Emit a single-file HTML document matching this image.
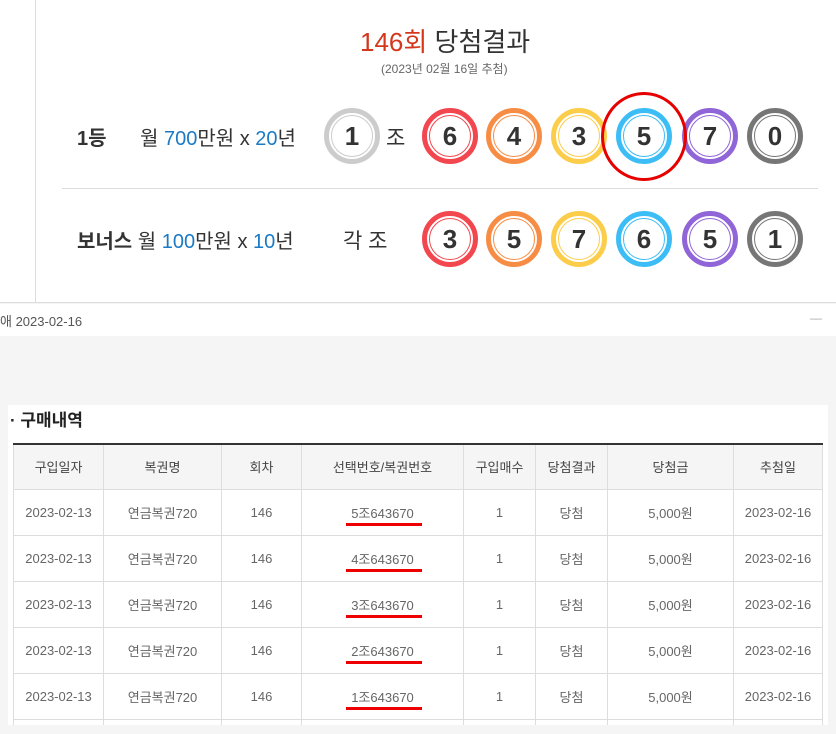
<!DOCTYPE html>
<html style="width:836px;height:734px;overflow:hidden"><head><meta charset="utf-8"><style>
*{margin:0;padding:0;box-sizing:border-box}
body{width:836px;height:734px;overflow:hidden;background:#f5f5f5;font-family:"Liberation Sans","Noto Sans CJK KR",sans-serif;position:relative;color:#333}
.top{position:absolute;left:0;top:0;width:836px;height:303px;background:#fff;border-bottom:1px solid #ddd}
.vl{position:absolute;left:35px;top:0;width:1px;height:303px;background:#ddd}
.t{position:absolute;white-space:nowrap}
.ball{position:absolute;width:56px;height:56px;border-radius:50%;border:5px solid;background:#fff;text-align:center;line-height:46px;font-size:26px;font-weight:bold;color:#333}
.ball:after{content:"";position:absolute;left:2px;top:2px;right:2px;bottom:2px;border:1px solid;border-color:inherit;border-radius:50%}
.r{border-color:#f2474f}.o{border-color:#f78d45}.y{border-color:#fbcd4a}.b{border-color:#3dbdf6}.p{border-color:#9065d8}.g{border-color:#767676}.w{border-color:#ccc}
.bar{position:absolute;left:0;top:304px;width:836px;height:32px;background:#fff}
.panel{position:absolute;left:8px;top:405px;width:820px;height:320px;background:#fff}
.tw{position:absolute;left:13px;top:443px;width:810px;height:282px;overflow:hidden}
table{width:810px;border-collapse:collapse;border-top:2px solid #333;font-size:13px;color:#666}
td,th{border:1px solid #ddd;text-align:center;height:46px;font-weight:normal;position:relative;padding:0}
th{background:#f5f5f5;color:#444;height:45px}
.ul{position:absolute;left:44px;bottom:9px;width:76px;height:3px;background:#e00}
</style></head><body>
<div class="top"></div><div class="vl"></div>
<div class="t" style="left:360px;top:22px;font-size:26px;color:#333"><span style="color:#d4371c">146회</span> 당첨결과</div>
<div class="t" style="left:381px;top:60px;font-size:12px;color:#666">(2023년 02월 16일 추첨)</div>
<div class="t" style="left:77px;top:122px;font-size:20px;font-weight:bold">1등</div>
<div class="t" style="left:140px;top:122px;font-size:20px">월 <span style="color:#1a7ac6">700</span>만원 x <span style="color:#1a7ac6">20</span>년</div>
<div class="ball w" style="left:324px;top:108px">1</div>
<div class="t" style="left:386px;top:122px;font-size:21px">조</div>
<div class="ball r" style="left:422px;top:108px">6</div>
<div class="ball o" style="left:486px;top:108px">4</div>
<div class="ball y" style="left:551px;top:108px">3</div>
<div class="ball b" style="left:616px;top:108px">5</div>
<div class="ball p" style="left:682px;top:108px">7</div>
<div class="ball g" style="left:747px;top:108px">0</div>
<div style="position:absolute;left:601px;top:92px;width:86px;height:89px;border:3px solid #e60000;border-radius:50%"></div>
<div style="position:absolute;left:62px;top:188px;width:756px;height:1px;background:#ddd"></div>
<div class="t" style="left:77px;top:225px;font-size:20px;font-weight:bold">보너스 <span style="font-weight:normal">월 <span style="color:#1a7ac6">100</span>만원 x <span style="color:#1a7ac6">10</span>년</span></div>
<div class="t" style="left:343px;top:225px;font-size:21px">각 조</div>
<div class="ball r" style="left:422px;top:211px">3</div>
<div class="ball o" style="left:486px;top:211px">5</div>
<div class="ball y" style="left:551px;top:211px">7</div>
<div class="ball b" style="left:616px;top:211px">6</div>
<div class="ball p" style="left:682px;top:211px">5</div>
<div class="ball g" style="left:747px;top:211px">1</div>
<div class="bar"></div>
<div class="t" style="left:0;top:311px;font-size:13px;color:#555">애 2023-02-16</div>
<div class="t" style="left:810px;top:311px;font-size:12px;color:#aaa">—</div>
<div class="panel"></div>
<div class="t" style="left:10px;top:406px;font-size:17px;font-weight:bold;color:#222">· 구매내역</div>
<div class="tw"><table>
<tr><th style="width:90px">구입일자</th><th style="width:118px">복권명</th><th style="width:80px">회차</th><th style="width:162px">선택번호/복권번호</th><th style="width:72px">구입매수</th><th style="width:72px">당첨결과</th><th style="width:126px">당첨금</th><th>추첨일</th></tr>
<tr><td>2023-02-13</td><td>연금복권720</td><td>146</td><td>5조643670<i class="ul"></i></td><td>1</td><td>당첨</td><td>5,000원</td><td>2023-02-16</td></tr>
<tr><td>2023-02-13</td><td>연금복권720</td><td>146</td><td>4조643670<i class="ul"></i></td><td>1</td><td>당첨</td><td>5,000원</td><td>2023-02-16</td></tr>
<tr><td>2023-02-13</td><td>연금복권720</td><td>146</td><td>3조643670<i class="ul"></i></td><td>1</td><td>당첨</td><td>5,000원</td><td>2023-02-16</td></tr>
<tr><td>2023-02-13</td><td>연금복권720</td><td>146</td><td>2조643670<i class="ul"></i></td><td>1</td><td>당첨</td><td>5,000원</td><td>2023-02-16</td></tr>
<tr><td>2023-02-13</td><td>연금복권720</td><td>146</td><td>1조643670<i class="ul"></i></td><td>1</td><td>당첨</td><td>5,000원</td><td>2023-02-16</td></tr>
<tr><td style="height:20px"></td><td></td><td></td><td></td><td></td><td></td><td></td><td></td></tr>
</table></div>
</body></html>
